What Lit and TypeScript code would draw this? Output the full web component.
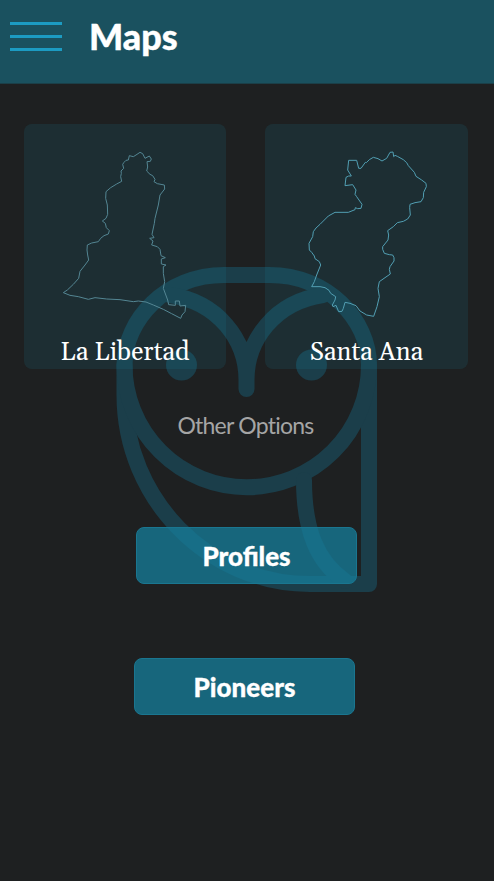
import { LitElement, html, css, svg } from "lit";
import { customElement, property } from "lit/decorators.js";

const LA_LIBERTAD =
  "360,112 348,120 340,125 328,122 325,135 318,136 312,142 308,148 311,160 303,168 304,175 302,185 305,199 290,207 272,218 258,230 257,250 262,270 263,298 258,310 247,318 256,325 259,338 268,347 265,357 252,362 242,370 235,380 215,384 202,390 201,405 203,420 206,435 195,450 180,469 176,490 160,508 142,525 130,533 150,541 175,545 205,553 225,548 260,552 300,554 340,560 355,558 378,561 400,570 430,583 455,596 482,610 486,600 495,590 497,571 480,573 478,558 466,558 466,571 446,569 443,555 430,520 434,500 430,475 430,455 438,450 424,447 424,432 436,428 423,422 420,403 412,395 395,390 399,378 389,370 402,368 396,358 403,325 405,310 415,270 420,240 434,222 433,210 412,206 402,200 405,193 398,182 390,178 380,168 383,156 381,140 391,139 394,132 388,123 375,130 368,116";

const SANTA_ANA =
  "390,112 399,111 401,125 405,121 412,124 430,134 440,143 445,152 463,172 468,184 485,195 498,205 499,215 491,232 490,248 483,260 465,263 450,268 449,278 451,300 443,312 430,319 412,323 400,335 383,347 386,360 384,375 368,395 368,403 373,415 388,419 398,420 402,428 402,438 390,455 388,463 391,477 375,488 358,500 354,520 358,545 351,575 341,604 320,600 300,588 288,572 270,565 255,562 250,580 246,589 236,590 228,571 219,575 217,570 225,555 227,545 212,535 207,526 195,518 180,515 155,515 163,500 170,480 182,450 178,440 165,431 163,423 155,412 148,405 147,385 158,365 160,350 168,339 180,328 205,303 225,292 265,292 285,284 286,278 293,281 303,280 306,268 290,245 285,238 288,225 278,209 255,212 258,187 266,183 274,183 263,165 266,136 290,136 296,160 303,160 316,142 319,143 328,134 340,127 354,131 366,138 380,130";

@customElement("map-card")
class MapCard extends LitElement {
  @property() name = "";
  @property() outline = "";
  @property() box = "";
  @property() stroke = "";

  static styles = css`
    :host {
      display: flex;
      flex-direction: column;
      height: 245px;
      border-radius: 8px;
      background: rgba(26, 122, 152, 0.16);
      overflow: hidden;
    }
    .map {
      display: block;
      width: 100%;
      height: 210px;
      flex: none;
    }
    .name {
      height: 35px;
      text-align: center;
      color: #fff;
      font: 25.2px/39px Georgia, Gelasio, "Liberation Serif", serif;
      white-space: nowrap;
    }
  `;

  render() {
    return html`
      <svg class="map" viewBox=${this.box}>
        ${svg`<polygon points=${this.outline} fill="none" stroke=${this.stroke} stroke-width="3" stroke-linejoin="round"></polygon>`}
      </svg>
      <div class="name">${this.name}</div>
    `;
  }
}

@customElement("app-root")
class AppRoot extends LitElement {
  static styles = css`
    :host {
      display: block;
      position: relative;
      height: 881px;
      overflow: hidden;
      background: #1e2021;
      font-family: Lato, sans-serif;
    }
    .owl {
      position: absolute;
      left: 112px;
      top: 262px;
      width: 270px;
      height: 336px;
      filter: blur(0.7px);
    }
    .owl-lines {
      fill: none;
      stroke: #1b3e4a;
      stroke-width: 16;
      stroke-linecap: round;
      stroke-linejoin: round;
    }
    .owl-eyes {
      fill: #1b3e4a;
    }
    .page {
      position: relative;
      display: flex;
      flex-direction: column;
    }
    header {
      display: flex;
      height: 84px;
      box-sizing: border-box;
      padding-left: 10px;
      gap: 27px;
      background: #1a515f;
      border-bottom: 1px solid #1b3f48;
    }
    .menu {
      display: flex;
      flex-direction: column;
      gap: 10px;
      width: 52px;
      padding: 21.5px 0 0;
      border: 0;
      background: none;
    }
    .bar {
      height: 3px;
      background: #1c9bc2;
    }
    h1 {
      margin: 0;
      color: #fff;
      font-size: 36px;
      line-height: 73px;
      font-weight: 900;
      -webkit-text-stroke: 0.4px #fff;
    }
    .cards {
      display: grid;
      grid-template-columns: 202px 203px;
      gap: 39px;
      padding: 40px 0 0 24px;
    }
    .other {
      margin: 41px 0 0;
      padding-right: 3px;
      text-align: center;
      color: #a5a5a5;
      font-size: 23px;
      line-height: 30px;
      font-weight: 400;
      letter-spacing: -0.75px;
    }
    .options {
      display: flex;
      flex-direction: column;
      gap: 74px;
      padding: 87px 0 0 134px;
    }
    .option {
      width: 221px;
      height: 57px;
      box-sizing: border-box;
      padding: 1px 0 0;
      border: 1px solid #1a7690;
      border-radius: 8px;
      background: rgba(22, 127, 157, 0.74);
      color: #fff;
      font: 900 26px/30px Lato, sans-serif;
      -webkit-text-stroke: 0.3px #fff;
    }
    .profiles {
      margin-left: 2px;
    }
  `;

  render() {
    return html`
      <svg class="owl" viewBox="112 262 270 336">
        <g class="owl-lines">
          <path d="M124.5 365 C124.5 320 166 275 224 275 H269.5 C327.5 275 369 320 369 365 V584 H310 C208 584 124.5 499 124.5 395 Z" />
          <path d="M124.5 365 A122.25 122.25 0 0 0 369 365" />
          <path d="M246.5 389 V380 C246.5 340 218 302 170 295 M246.5 380 C246.5 340 275 302 323 295" />
          <path d="M304 480 C304 530 317 562 345 581" />
        </g>
        <g class="owl-eyes">
          <circle cx="181.5" cy="365" r="15.5" />
          <circle cx="311.5" cy="365" r="15.5" />
        </g>
      </svg>
      <div class="page">
        <header>
          <button class="menu" aria-label="Menu">
            <span class="bar"></span><span class="bar"></span><span class="bar"></span>
          </button>
          <h1>Maps</h1>
        </header>
        <div class="cards">
          <map-card name="La Libertad" .outline=${LA_LIBERTAD} box="12 27 606 630" stroke="#548693"></map-card>
          <map-card name="Santa Ana" .outline=${SANTA_ANA} box="15 27 609 630" stroke="#529fb3"></map-card>
        </div>
        <h2 class="other">Other Options</h2>
        <div class="options">
          <button class="option profiles">Profiles</button>
          <button class="option">Pioneers</button>
        </div>
      </div>
    `;
  }
}
